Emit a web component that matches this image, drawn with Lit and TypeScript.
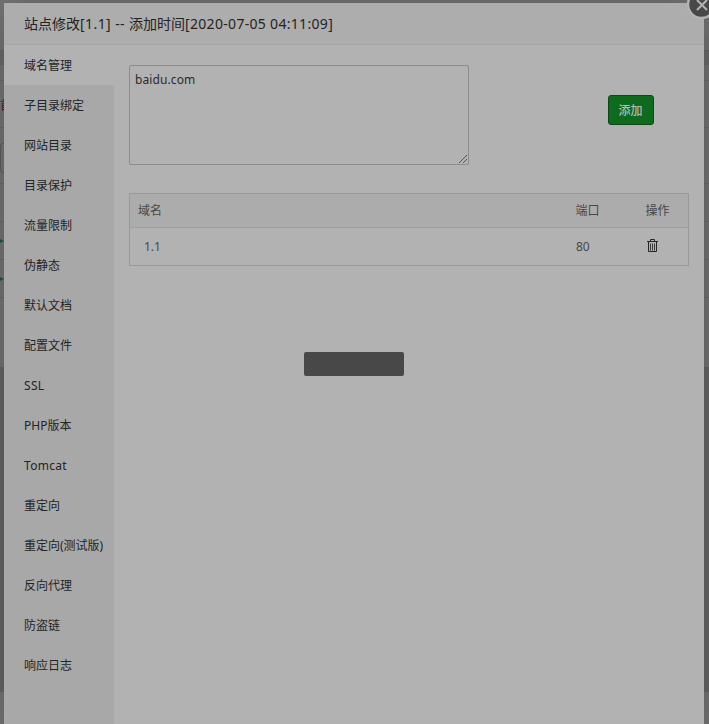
import { LitElement, html, css } from "lit";
import { customElement, state } from "lit/decorators.js";

const MENU = [
  "域名管理", "子目录绑定", "网站目录", "目录保护", "流量限制", "伪静态", "默认文档", "配置文件",
  "SSL", "PHP版本", "Tomcat", "重定向", "重定向(测试版)", "反向代理", "防盗链", "响应日志",
];

@customElement("site-backdrop")
class SiteBackdrop extends LitElement {
  static styles = css`
    :host { display: flex; flex-direction: column; height: 724px; background: #686868; overflow: hidden; }
    div { box-sizing: border-box; flex: none; background: #777; }
    .top { height: 51px; border-bottom: 1px solid #696969; }
    .gap { height: 14px; background: #6e6e6e; }
    .bar { height: 16px; border-bottom: 1px solid #6b6b6b; }
    .tools { height: 47px; border-bottom: 1px solid #6b6b6b; padding-top: 14px; }
    .word { display: block; margin-top: 2px; color: #45261b; font: 12px/15px "Noto Sans CJK SC", sans-serif; white-space: nowrap; }
    .find { height: 56px; border-bottom: 1px solid #6b6b6b; padding-top: 15px; }
    .input { display: block; box-sizing: border-box; width: 40px; height: 30px; border: 1px solid #606060; border-radius: 3px; }
    .row { height: 38px; border-bottom: 1px solid #6b6b6b; display: flex; align-items: center; }
    .play { width: 0; height: 0; border: 2px solid transparent; border-left: 4px solid #175f38; border-right: 0; }
    .pager { height: 69px; }
    .blank { height: 325px; background: #686868; }
    .foot { height: 32px; }
  `;
  render() {
    return html`<div class="top"></div><div class="gap"></div><div class="bar"></div>
      <div class="tools"><span class="word">首</span></div>
      <div class="find"><span class="input"></span></div>
      <div class="row"></div>
      <div class="row"><i class="play"></i></div>
      <div class="row"><i class="play"></i></div>
      <div class="pager"></div><div class="blank"></div><div class="foot"></div>`;
  }
}

@customElement("site-menu")
class SiteMenu extends LitElement {
  @state() private active = 0;
  static styles = css`
    :host { display: block; width: 110px; flex: none; background: #a8a8a8; }
    .item { box-sizing: border-box; height: 40px; padding: 1px 0 0 20px; line-height: 40px; font-size: 12px; color: #242424; white-space: nowrap; cursor: pointer; }
    .on { background: #b2b2b2; }
    .wide { letter-spacing: 0.3px; }
  `;
  render() {
    return MENU.map((t, i) => html`<div class="item ${i === this.active ? "on" : ""} ${/^[A-Za-z]+$/.test(t) ? "wide" : ""}" @click=${() => (this.active = i)}>${t}</div>`);
  }
}

@customElement("app-root")
class AppRoot extends LitElement {
  static styles = css`
    :host { display: block; position: relative; width: 709px; height: 724px; overflow: hidden; font-family: "Noto Sans", "Noto Sans CJK SC", sans-serif; }
    .modal { position: absolute; left: 4px; top: 3px; width: 700px; height: 740px; background: #b2b2b2; box-shadow: 1px 1px 50px rgba(0, 0, 0, 0.3); display: flex; flex-direction: column; }
    .head { box-sizing: border-box; height: 42px; flex: none; padding-left: 20px; line-height: 42px; font-size: 14px; color: #242424; background: #adadad; border-bottom: 1px solid #a6a6a6; white-space: nowrap; }
    .head .site { letter-spacing: 0.42px; }
    .head .date { letter-spacing: 0.31px; }
    .body { flex: 1; display: flex; }
    .main { flex: 1; padding: 20px 15px; }
    .form { display: flex; height: 100px; margin-bottom: 28px; justify-content: space-between; }
    textarea { box-sizing: border-box; width: 340px; height: 100px; padding: 5px; border: 1px solid #8d8d8d; border-radius: 2px; background: transparent; color: #2b2b2b; font: 12px/18px "Noto Sans", sans-serif; letter-spacing: 0.1px; margin: 0; resize: none; outline: none; display: block; }
    .field { position: relative; }
    .grip { position: absolute; right: 1px; bottom: 1px; width: 10px; height: 10px; }
    .add { box-sizing: border-box; width: 46px; height: 30px; margin: 30px 35px 0 0; padding: 0 1px 0 0; border: 1px solid #0b4917; border-radius: 3px; background: #0e6b1e; color: #b8b8b8; font: 500 12px/28px "Noto Sans CJK SC", sans-serif; }
    .table { border: 1px solid #999; font-size: 12px; color: #474747; }
    .tr { display: grid; grid-template-columns: 438px 70px 50px; align-items: center; height: 37px; }
    .tr > span { padding-left: 8px; }
    .tr > .name { padding-left: 14px; }
    .th { height: 33px; background: #acacac; border-bottom: 1px solid #a0a0a0; }
    .th > span { padding-bottom: 2px; }
    .th > span + span { padding-left: 7.5px; }
    .trash { display: block; width: 13px; height: 14px; margin-left: 8px; margin-top: -1px; }
    .tip { position: absolute; left: 304px; top: 352px; width: 100px; height: 24px; border-radius: 2px; background: #484848; }
    .close { position: absolute; left: 686px; top: -11px; width: 31px; height: 31px; }
  `;
  render() {
    return html`<site-backdrop></site-backdrop>
      <section class="modal">
        <header class="head">站点修改<span class="site">[1.1] -- </span>添加时间<span class="date">[2020-07-05 04:11:09]</span></header>
        <div class="body">
          <site-menu></site-menu>
          <div class="main">
            <div class="form">
              <div class="field"><textarea .value=${"baidu.com"} spellcheck="false"></textarea>
                <svg class="grip" viewBox="0 0 10 10" shape-rendering="crispEdges"><path d="M1 9L9 1M5 9l4-4" stroke="#3c3c3c" stroke-width=".8" fill="none"/></svg></div>
              <button class="add">添加</button>
            </div>
            <div class="table">
              <div class="tr th"><span>域名</span><span>端口</span><span>操作</span></div>
              <div class="tr"><span class="name">1.1</span><span>80</span>
                <svg class="trash" viewBox="0 0 13 14" fill="none" stroke="#242424"><path d="M1 2.5h11M4.5 2V.5h4V2M2.5 3v9.5h8V3"/><path d="M4.5 4.5v7M6.5 4.5v7M8.5 4.5v7" stroke="#3a3a3a"/></svg></div>
            </div>
          </div>
        </div>
      </section>
      <svg class="close" viewBox="0 0 31 31"><circle cx="15.5" cy="15.5" r="13.5" fill="#484848" stroke="#b2b2b2" stroke-width="2.5"/><path d="M11 11l10 10M21 11l-10 10" stroke="#b2b2b2" stroke-width="2"/></svg>
      <div class="tip"></div>`;
  }
}
